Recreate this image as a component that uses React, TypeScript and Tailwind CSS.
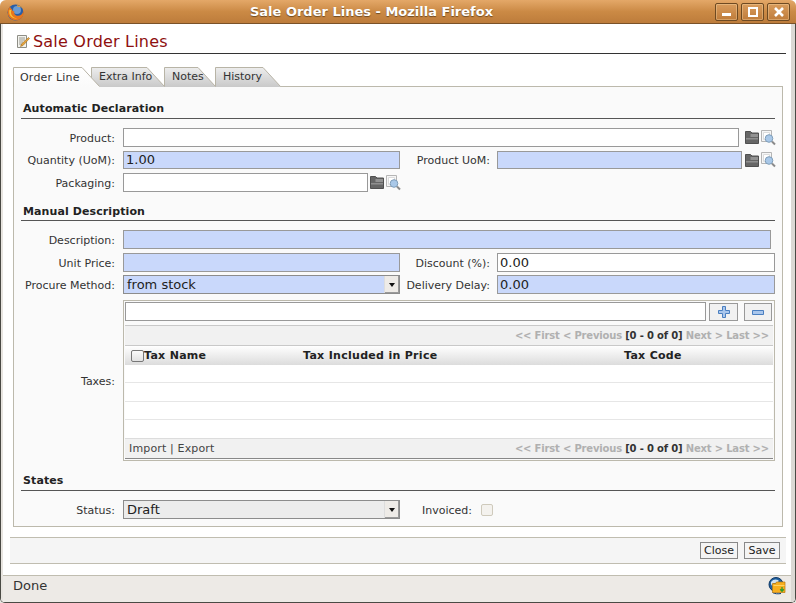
import React from "react";

const fieldBlue = "bg-[#c9d8fb]";

function FolderIcon() {
  return (
    <svg width="14" height="15" viewBox="0 0 14 15" className="shrink-0">
      <path d="M0.500 1.500h5l1.500 1.500h6.500v10.500h-13z" fill="#666" stroke="#505050" />
      <path d="M5.500 4h7.500v3H5.500z" fill="#939393" />
      <path d="M1 8h12v1.500H1z" fill="#8f8f8f" />
    </svg>
  );
}

function FindIcon() {
  return (
    <svg width="15" height="16" viewBox="0 0 15 16" className="shrink-0">
      <path d="M0.500 0.500h10v11h-10z" fill="#f6f6f6" stroke="#b5b5b5" />
      <path d="M2.500 2.500h6v7h-6z" fill="#fff" stroke="#dcdcdc" />
      <circle cx="8" cy="8.500" r="3.800" fill="#a9c8e8" stroke="#7f9db8" />
      <path d="M11 11.500l3 3" stroke="#8a8a8a" strokeWidth="2" />
    </svg>
  );
}

function Pickers() {
  return (
    <div className="flex w-[30px] items-center gap-[2px]">
      <FolderIcon />
      <FindIcon />
    </div>
  );
}

function Label({ children, className = "w-[94px] mr-[8px]" }: { children: React.ReactNode; className?: string }) {
  return <div className={`${className} shrink-0 whitespace-nowrap pt-[3px] text-right text-[11px] text-[#333]`}>{children}</div>;
}

function Field({ value = "", className = "" }: { value?: string; className?: string }) {
  return (
    <div className={`flex h-full shrink-0 items-center border border-[#999] pl-[2px] text-[13px] text-[#222] ${className}`}>
      {value}
    </div>
  );
}

function SelectBox({ value, className }: { value: string; className: string }) {
  return (
    <div className={`flex h-full w-[277px] shrink-0 items-center border border-[#8c8c8c] text-[13px] text-[#222] ${className}`}>
      <span className="flex-1 pl-[3px]">{value}</span>
      <span className="flex h-full w-[15px] items-center justify-center border-l border-[#ddd] bg-[#eeebe7] shadow-[inset_-1px_-1px_0_#9a9a9a]">
        <span className="h-0 w-0 border-x-[3px] border-t-[4px] border-x-transparent border-t-[#111]" />
      </span>
    </div>
  );
}

function Section({ title, className }: { title: string; className: string }) {
  return (
    <div className={`flex items-end border-b border-[#555] pl-[2px] text-[11px] font-bold tracking-[0.1px] text-[#222] ${className}`}>
      {title}
    </div>
  );
}

function Tab({ label, width, active, className = "" }: { label: string; width: number; active?: boolean; className?: string }) {
  const c = width - 18;
  return (
    <div className={`relative h-[20px] shrink-0 ${active ? "z-10" : ""} ${className}`} style={{ width }}>
      <svg width={width} height="20" className="absolute inset-0">
        <defs>
          <linearGradient id={`tab-${label[0]}`} x1="0" x2="0" y1="0" y2="1">
            <stop offset="0" stopColor={active ? "#ffffff" : "#ededed"} />
            <stop offset="1" stopColor={active ? "#fafafa" : "#c9c9c9"} />
          </linearGradient>
        </defs>
        <path d={`M0.500 20V0.500H${c}L${width - 0.5} 19.500V20z`} fill={`url(#tab-${label[0]})`} />
        <path
          d={active ? `M0.500 20V0.500H${c}L${width - 0.5} 19.500` : `M0.500 19.500V0.500H${c}L${width - 0.5} 19.500`}
          fill="none"
          stroke="#b8b4a6"
        />
      </svg>
      <span className={`relative block text-[11px] text-[#333] ${active ? "pl-[7px] pt-[3px] tracking-[0.2px]" : "pl-[8px] pt-[2px]"}`}>{label}</span>
    </div>
  );
}

function Pager() {
  return (
    <span className="text-[10px] font-bold tracking-[-0.18px] text-[#b0b0b0]">
      {"<< First < Previous "}
      <span className="text-[#333]">[0 - 0 of 0]</span>
      {" Next > Last >>"}
    </span>
  );
}

function TaxesBox() {
  return (
    <div className="flex h-[161px] flex-1 flex-col border border-[#bcb9ac] px-px">
      <div className="flex h-[24px] items-start pt-px">
        <div className="h-[19px] w-[581px] border border-[#999] bg-white" />
        <button className="ml-[3px] mt-px flex h-[18px] w-[29px] items-center justify-center border border-[#999] bg-[#f1f1f1]">
          <svg width="12" height="12" viewBox="0 0 12 12">
            <path d="M4.500 0.500h3v4h4v3h-4v4h-3v-4h-4v-3h4z" fill="#a9c6ec" stroke="#4a7fc0" />
          </svg>
        </button>
        <button className="ml-[6px] mt-px flex h-[18px] w-[28px] items-center justify-center border border-[#999] bg-[#f1f1f1]">
          <svg width="12" height="5" viewBox="0 0 12 5">
            <path d="M0.500 0.500h11v4h-11z" fill="#a9c6ec" stroke="#4a7fc0" />
          </svg>
        </button>
      </div>
      <div className="flex h-[21px] items-center justify-end border-y border-[#c9c9c9] bg-[#f1f1f1] pr-[4px]">
        <Pager />
      </div>
      <div className="flex h-[19px] items-center bg-gradient-to-b from-white to-[#dcdcdc] pt-px text-[11px] font-bold tracking-[0.3px] text-[#222]">
        <span className="ml-[6px] h-[12px] w-[13px] shrink-0 rounded-[2px] border border-[#777] bg-gradient-to-b from-[#fafafa] to-[#e2e2e2]" />
        <span className="w-[159px] shrink-0">Tax Name</span>
        <span className="w-[321px] shrink-0">Tax Included in Price</span>
        <span>Tax Code</span>
      </div>
      <div className="h-[18px] border-b border-[#e6e6e6] bg-white" />
      <div className="h-[19px] border-b border-[#e6e6e6] bg-white" />
      <div className="h-[18px] border-b border-[#e6e6e6] bg-white" />
      <div className="h-[19px] border-b border-[#dcdcdc] bg-white" />
      <div className="flex h-[20px] items-center justify-between border-b border-[#888] bg-[#f1f1f1] pl-[4px] pr-[4px]">
        <span className="pt-px text-[11px] tracking-[0.15px] text-[#444]">Import | Export</span>
        <Pager />
      </div>
    </div>
  );
}

function FormPanel() {
  return (
    <div className="-mt-px flex h-[441px] flex-col border border-[#bcb9ac] bg-[#fafafa] px-[7px]">
      <Section title="Automatic Declaration" className="h-[32px] pb-[1px]" />
      <div className="mt-[9px] flex h-[19px] items-center">
        <Label>Product:</Label>
        <Field className="flex-1 shrink bg-white" />
        <div className="ml-[6px]"><Pickers /></div>
      </div>
      <div className="mt-[4px] flex h-[18px] items-center">
        <Label>Quantity (UoM):</Label>
        <Field value="1.00" className={`w-[277px] ${fieldBlue}`} />
        <Label className="w-[90px] mr-[7px]">Product UoM:</Label>
        <Field className={`w-[245px] ${fieldBlue}`} />
        <div className="ml-[3px]"><Pickers /></div>
      </div>
      <div className="mt-[4px] flex h-[19px] items-center">
        <Label>Packaging:</Label>
        <Field className="w-[245px] bg-white" />
        <div className="ml-[2px]"><Pickers /></div>
      </div>

      <Section title="Manual Description" className="h-[29px] pb-0" />
      <div className="mt-[9px] flex h-[19px] items-center">
        <Label>Description:</Label>
        <Field className={`w-[648px] ${fieldBlue}`} />
      </div>
      <div className="mt-[4px] flex h-[19px] items-center">
        <Label>Unit Price:</Label>
        <Field className={`w-[277px] ${fieldBlue}`} />
        <Label className="w-[90px] mr-[7px]">Discount (%):</Label>
        <Field value="0.00" className="w-[278px] bg-white" />
      </div>
      <div className="mt-[3px] flex h-[19px] items-center">
        <Label>Procure Method:</Label>
        <SelectBox value="from stock" className={fieldBlue} />
        <Label className="w-[90px] mr-[7px]">Delivery Delay:</Label>
        <Field value="0.00" className={`w-[278px] ${fieldBlue}`} />
      </div>
      <div className="mt-[6px] flex items-center">
        <Label>Taxes:</Label>
        <TaxesBox />
      </div>

      <Section title="States" className="h-[30px] pb-[1px]" />
      <div className="mt-[9px] flex h-[19px] items-center">
        <Label>Status:</Label>
        <SelectBox value="Draft" className="bg-[#ececec]" />
        <Label className="w-[72px] mr-[9px]">Invoiced:</Label>
        <span className="h-[12px] w-[12px] rounded-[2px] border border-[#cfcabc] bg-[#f4f2ee]" />
      </div>
    </div>
  );
}

function WindowButton({ children }: { children: React.ReactNode }) {
  return (
    <div className="flex h-[18px] w-[23px] items-center justify-center rounded-[2px] border border-[#6e4a22] bg-gradient-to-b from-[#d99c5c] to-[#bf7c3a] shadow-[inset_0_0_0_1px_rgba(255,225,180,0.35)]">
      {children}
    </div>
  );
}

function FirefoxIcon() {
  return (
    <svg width="17" height="17" viewBox="0 0 17 17" className="mt-[2px] shrink-0">
      <circle cx="8.500" cy="8.500" r="8" fill="#2a5ea6" />
      <circle cx="10" cy="6" r="4" fill="#6b9bd2" />
      <path d="M3 2.500C0.500 5 0 9 1.500 12c1.700 3.200 5.500 4.800 8.800 4.200 3-.5 5.500-2.800 6.200-5.700.3-1.600.2-3-.5-4.500.2 2-.4 3.700-1.800 4.800-1.700 1.300-4.200 1.300-5.700.1C7.200 9.800 6.800 8.400 7.600 7.400 6.200 7.300 5.200 6.500 5.200 5.400 4.200 5 3.500 4 3 2.500z" fill="#e8761c" />
      <path d="M2.500 5.500C1.700 8 2.200 10.500 4 12.500c1.500 1.500 4 2.300 6 1.700-2.500-.2-4.600-1.500-5.500-3.500C3.800 9 3.800 7.200 4.500 6 3.600 6.200 3 6 2.500 5.500z" fill="#f7c23c" />
      <path d="M10 1c2.300.3 4 1.500 5 3-1.500-1-3-1.500-4.500-1.300z" fill="#f0a030" />
    </svg>
  );
}

function NoteIcon() {
  return (
    <svg width="14" height="15" viewBox="0 0 14 15">
      <path d="M1.500 1.500h9v12h-9z" fill="#f3f3ee" stroke="#8e8e86" />
      <path d="M3 4h6M3 6h6M3 8h4M3 10h3" stroke="#9a9a92" />
      <path d="M12.500 3.500l1 1L7 11.500l-2.500 1 1-2.500z" fill="#e9a53a" stroke="#9a6a1e" strokeWidth="0.6" />
    </svg>
  );
}

function StatusIcon() {
  return (
    <svg width="18" height="18" viewBox="0 0 18 18">
      <circle cx="8" cy="7.500" r="7" fill="#1f5f9e" stroke="#123a66" />
      <path d="M3 5c2-3 5-3 7-2s-1 3-3 3-3 1-2 3C3.500 9 2.500 7 3 5z" fill="#cfe0ee" />
      <path d="M4.500 15.500c2 1.500 6 1.500 8.500 1" stroke="#123a66" fill="none" />
      <path d="M4.500 6.500h3l1-1.500h8.500v10.500H4.500z" fill="#f7ae1e" stroke="#b77a10" strokeWidth="0.7" />
      <path d="M5.500 8h11v1H5.500z" fill="#ffd362" />
      <path d="M14 10v3.500M12.200 12.300l1.800 2 1.800-2" stroke="#2e9b2e" strokeWidth="1.300" fill="none" />
    </svg>
  );
}

export default function App() {
  return (
    <div className="flex h-[603px] w-[796px] flex-col overflow-hidden rounded-t-[6px] bg-[#e8e5e0] font-['DejaVu_Sans',sans-serif]">
      {/* Title bar */}
      <div className="flex h-[24px] shrink-0 items-center border-b border-[#7a5228] bg-gradient-to-b from-[#e4a868] via-[#cb8a45] to-[#bd7c3b] pl-[7px] pr-[6px]">
        <FirefoxIcon />
        <div className="flex-1 pl-[4px] text-center text-[13px] font-bold text-white [text-shadow:0_1px_1px_#6e4a22]">
          Sale Order Lines - Mozilla Firefox
        </div>
        <div className="flex gap-[3px]">
          <WindowButton><span className="mt-[6px] h-[3px] w-[9px] bg-white" /></WindowButton>
          <WindowButton><span className="h-[10px] w-[10px] border-2 border-white" /></WindowButton>
          <WindowButton>
            <svg width="10" height="10" viewBox="0 0 10 10"><path d="M1 1l8 8M9 1l-8 8" stroke="#fff" strokeWidth="2.600" /></svg>
          </WindowButton>
        </div>
      </div>

      {/* Window body */}
      <div className="flex min-h-0 flex-1 flex-col overflow-hidden rounded-b-[5px] border-x border-b border-[#4a4a44]">
        <div className="flex min-h-0 flex-1 flex-col border-x-2 border-r-[4px] border-l-[#e8e5e0] border-r-[#dcd9d4] bg-white">
          <div className="flex-1 pl-[7px] pr-[5px]">
            <div className="flex h-[30px] items-end gap-[3px] border-b border-[#333] pl-[6px]">
              <span className="mb-[4px]"><NoteIcon /></span>
              <h1 className="mb-[2px] text-[16px] leading-[18px] tracking-[0.2px] text-[#8e0f0f]">Sale Order Lines</h1>
            </div>
            <div className="px-[3px]">
              <div className="mt-[13px] flex items-end">
                <Tab label="Order Line" width={87} active className="mr-[-9px]" />
                <Tab label="Extra Info" width={74} className="mr-[-1px]" />
                <Tab label="Notes" width={52} className="mr-[-1px]" />
                <Tab label="History" width={66} />
              </div>
              <FormPanel />
            </div>
            <div className="mt-[10px] flex h-[27px] items-center justify-end gap-[6px] border-y border-[#c0bdb0] bg-[#f5f5f5] pr-[6px]">
              <button className="h-[17px] w-[38px] border border-[#888] bg-[#f4f4f4] text-[11px] text-[#222]">Close</button>
              <button className="h-[17px] w-[36px] border border-[#888] bg-[#f4f4f4] text-[11px] text-[#222]">Save</button>
            </div>
          </div>
          {/* Status bar */}
          <div className="mt-[10px] flex h-[27px] shrink-0 items-center justify-between border-t border-[#c0bdb0] bg-[#edeae6] pb-[6px] pl-[10px] pr-[5px]">
            <span className="text-[13px] text-[#333]">Done</span>
            <StatusIcon />
          </div>
        </div>
      </div>
    </div>
  );
}
